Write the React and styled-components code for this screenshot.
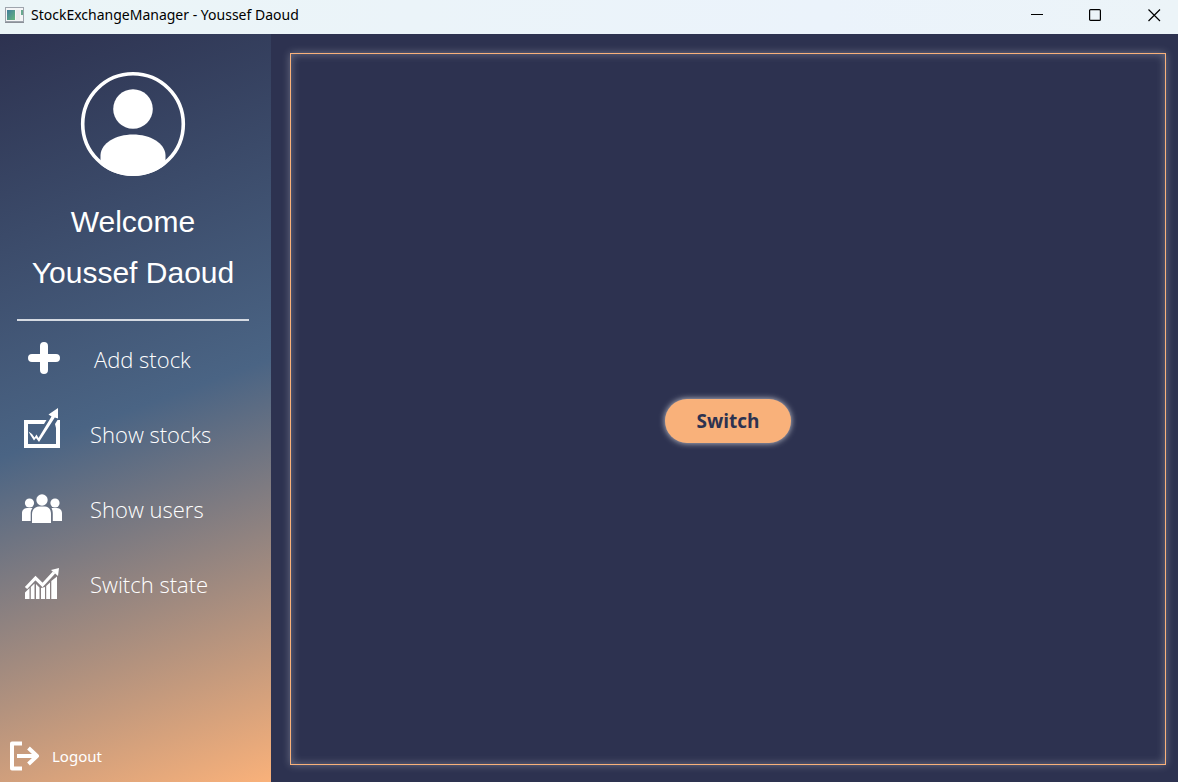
import React from "react";
import styled, { createGlobalStyle } from "styled-components";

const GlobalStyle = createGlobalStyle`
  *, *::before, *::after { box-sizing: border-box; }
  html, body { margin: 0; }
  body { background: #2d3250; }
  button { border: 0; padding: 0; background: none; font: inherit; color: inherit; cursor: pointer; }
  svg { display: block; flex: none; }
`;

const uiFont = `"Segoe UI", "Open Sans", "Noto Sans", sans-serif`;

const Window = styled.div`
  display: flex;
  flex-direction: column;
  min-height: 100vh;
  font-family: ${uiFont};
`;

const TitleBar = styled.header`
  display: flex;
  align-items: center;
  height: 34px;
  padding: 0 0 4px 5px;
  background: linear-gradient(90deg, #ebf5f7, #ebf3fb 70%, #ecf4f8);
  color: #000;
`;

const WindowTitle = styled.h1`
  flex: 1;
  margin: 0 0 0 6px;
  font-family: "Segoe UI", "Noto Sans", sans-serif;
  font-size: 14px;
  font-weight: 400;
  line-height: 20px;
`;

const WindowButton = styled.button`
  display: flex;
  align-items: center;
  justify-content: center;
  width: 59px;
  height: 30px;

  &:last-child { width: 48px; margin-left: 5px; }
`;

const Body = styled.div`
  display: flex;
  flex: 1;
`;

const Sidebar = styled.aside`
  display: flex;
  flex-direction: column;
  flex: none;
  width: 271px;
  padding: 37px 0 10px;
  background: linear-gradient(160deg, #2d3250, #4a6484 50%, #f9b17a);
  color: #fff;
`;

const Profile = styled.section`
  display: flex;
  flex-direction: column;
  align-items: center;
  margin: 0 22px 0 17px;
  padding-bottom: 21px;
  border-bottom: 2px solid #d5dae2;
`;

const Greeting = styled.p`
  margin: 0;
  font-family: Arial, "Liberation Sans", sans-serif;
  font-size: 30px;
  line-height: 51px;
  white-space: nowrap;

  svg + & { margin-top: 19px; }
`;

const Menu = styled.nav`
  display: flex;
  flex-direction: column;
`;

const MenuItem = styled.button`
  display: flex;
  align-items: center;
  gap: 24px;
  height: 75px;
  padding-left: ${(p) => (p.$inset ? 22 : 18)}px;
  font-size: 22px;
  font-weight: 300;
  line-height: 32px;
  text-align: left;
`;

const LogoutButton = styled.button`
  display: flex;
  align-items: center;
  align-self: flex-start;
  gap: 12px;
  margin-top: auto;
  padding-left: 8px;
  font-family: "Segoe UI", "Noto Sans", sans-serif;
  font-size: 15px;
  line-height: 20px;
`;

const Content = styled.main`
  display: flex;
  flex: 1;
  padding: 19px 12px 17px 19px;
  background: #2d3250;
`;

const Panel = styled.section`
  display: flex;
  flex: 1;
  align-items: center;
  justify-content: center;
  padding-top: 24px;
  border: 1px solid #f9b17a;
  box-shadow: 0 0 8px rgba(255, 255, 255, 0.3), inset 0 0 8px rgba(255, 255, 255, 0.3);
`;

const SwitchButton = styled.button`
  min-width: 126px;
  height: 44px;
  border-radius: 22px;
  background: #f9b17a;
  color: #2d3250;
  font-size: 19px;
  font-weight: 700;
  line-height: 26px;
  box-shadow: 0 0 6px rgba(255, 255, 255, 0.75);
`;

const AppIcon = () => (
  <svg width="20" height="16" viewBox="0 0 20 16" aria-hidden="true">
    <defs>
      <linearGradient id="appScreen" x1="0" y1="0" x2="1" y2="1">
        <stop offset="0" stopColor="#3f7d9c" />
        <stop offset="1" stopColor="#65b57c" />
      </linearGradient>
    </defs>
    <rect x="0.5" y="0.5" width="18" height="14" fill="#f4f5f6" stroke="#9fa5ad" />
    <rect x="2" y="3" width="8" height="10" fill="url(#appScreen)" />
    <rect x="11" y="3" width="4" height="10" fill="#e6e8ea" />
    <rect x="16" y="3" width="2" height="5" fill="#69a98f" />
    <path d="M0 15.5H19" stroke="#8b9098" />
  </svg>
);

const AvatarIcon = () => (
  <svg width="106" height="106" viewBox="0 0 106 106" aria-hidden="true">
    <defs>
      <clipPath id="avatarClip"><circle cx="53" cy="53" r="52" /></clipPath>
    </defs>
    <circle cx="53" cy="53" r="50.3" fill="none" stroke="#fff" strokeWidth="3.6" />
    <circle cx="53" cy="38" r="19.8" fill="#fff" />
    <path d="M20.5 106V84C21 72 36 63.500 53 63.500S85 72 85.500 84V106Z" fill="#fff" clipPath="url(#avatarClip)" />
  </svg>
);

const PlusIcon = () => (
  <svg width="48" height="40" viewBox="0 0 48 40" aria-hidden="true">
    <path d="M22 7V31M10 19H34" stroke="#fff" strokeWidth="8" strokeLinecap="round" />
  </svg>
);

const StocksIcon = () => (
  <svg width="48" height="56" viewBox="0 0 48 56" aria-hidden="true" fill="#fff">
    <path d="M6 14H28.500L26 18H10V38H38V21L42 14V42H6Z" />
    <path d="M37 18L39.500 14H42V22H38Z" />
    <path d="M10.500 25.500L14 28L16.500 31.500L18.500 28.500L20.500 32L33.500 10.500L30.500 8.500L40 2L40 12.500L36.800 11.500L21 36L18 32L16 34.500L13 30Z" />
  </svg>
);

const UsersIcon = () => (
  <svg width="48" height="40" viewBox="0 0 48 40" aria-hidden="true" fill="#fff">
    <circle cx="24" cy="11" r="5.700" />
    <circle cx="11.500" cy="14" r="4.600" />
    <circle cx="37" cy="14" r="4.600" />
    <path d="M14 34V25C14 20.500 17.500 17.500 21 17.500H27C30.500 17.500 33 20.500 33 25V34Z" />
    <path d="M4 32V24C4 21 6.500 19 9 19H14.500C13 21 12.700 22.500 12.700 25V32Z" />
    <path d="M44 32V24C44 21 41.500 19 39 19H33.500C34.500 21 34.800 22.500 34.800 25V32Z" />
  </svg>
);

const ChartIcon = () => (
  <svg width="48" height="40" viewBox="0 0 48 40" aria-hidden="true" fill="#fff">
    <path d="M7 28.500L11.500 24V35H7ZM12.800 23L16.500 19.500V35H12.800ZM18 20L21.500 23.500V35H18ZM23 24L27 23V35H23ZM28.200 22L32 18.500V35H28.200ZM33.300 17L39 12.500V35H33.300Z" />
    <path d="M8 24L17.500 14L24.500 21L36 8.500" fill="none" stroke="#fff" strokeWidth="3.200" />
    <path d="M33 6L41 4L40 12Z" />
  </svg>
);

const LogoutIcon = () => (
  <svg width="32" height="32" viewBox="0 0 32 32" aria-hidden="true" fill="none" stroke="#fff" strokeWidth="4" strokeLinejoin="round">
    <path d="M14 3.500H4V28.500H14" />
    <path d="M9 16H29" />
    <path d="M20.500 8L29 16L20.500 24" />
  </svg>
);

const MinimizeIcon = () => (
  <svg width="13" height="13" viewBox="0 0 13 13" aria-hidden="true"><path d="M1 5.500H13" stroke="#000" /></svg>
);
const MaximizeIcon = () => (
  <svg width="13" height="13" viewBox="0 0 13 13" aria-hidden="true"><rect x="0.600" y="0.600" width="10.800" height="10.800" rx="1" fill="none" stroke="#000" strokeWidth="1.200" /></svg>
);
const CloseIcon = () => (
  <svg width="13" height="13" viewBox="0 0 13 13" aria-hidden="true"><path d="M0.500 0.500L12 12M12 0.500L0.500 12" stroke="#000" strokeWidth="1.200" /></svg>
);

const menuItems = [
  { label: "Add stock", Icon: PlusIcon, inset: true },
  { label: "Show stocks", Icon: StocksIcon },
  { label: "Show users", Icon: UsersIcon },
  { label: "Switch state", Icon: ChartIcon },
];

export default function App() {
  return (
    <Window>
      <GlobalStyle />
      <TitleBar>
        <AppIcon />
        <WindowTitle>StockExchangeManager - Youssef Daoud</WindowTitle>
        <WindowButton type="button" aria-label="Minimize"><MinimizeIcon /></WindowButton>
        <WindowButton type="button" aria-label="Maximize"><MaximizeIcon /></WindowButton>
        <WindowButton type="button" aria-label="Close"><CloseIcon /></WindowButton>
      </TitleBar>
      <Body>
        <Sidebar>
          <Profile>
            <AvatarIcon />
            <Greeting>Welcome</Greeting>
            <Greeting>Youssef Daoud</Greeting>
          </Profile>
          <Menu>
            {menuItems.map(({ label, Icon, inset }) => (
              <MenuItem key={label} type="button" $inset={inset}>
                <Icon />
                {label}
              </MenuItem>
            ))}
          </Menu>
          <LogoutButton type="button">
            <LogoutIcon />
            Logout
          </LogoutButton>
        </Sidebar>
        <Content>
          <Panel>
            <SwitchButton type="button">Switch</SwitchButton>
          </Panel>
        </Content>
      </Body>
    </Window>
  );
}
